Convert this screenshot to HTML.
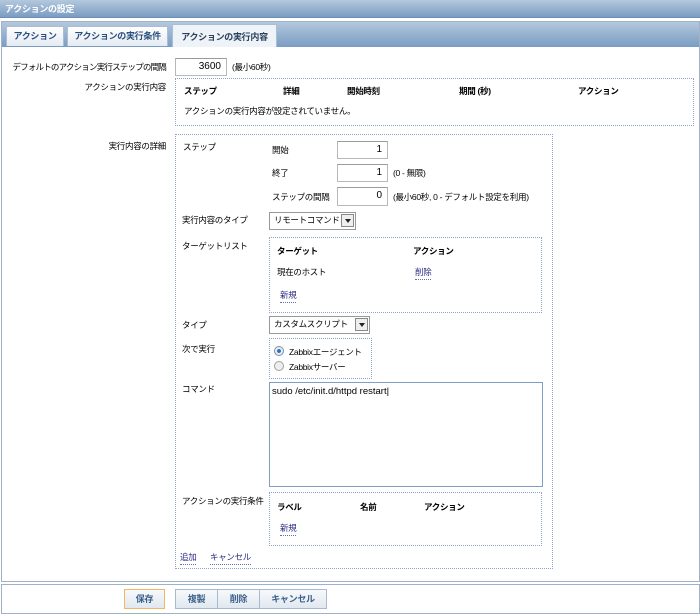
<!DOCTYPE html>
<html><head><meta charset="utf-8"><style>
*{box-sizing:border-box;margin:0;padding:0}
body{width:700px;height:615px;background:#fff;font-family:"Liberation Sans","Noto Sans CJK JP",sans-serif;font-size:8.5px;letter-spacing:-0.3px;color:#000;position:relative;overflow:hidden}
.a{position:absolute;white-space:nowrap;line-height:12px}
.bar{background:linear-gradient(#b3c8dd,#7a9cc2)}
.inp{position:absolute;border:1px solid #b8b8b8;border-top-color:#9a9a9a;background:#fff;text-align:right;padding-right:5px;line-height:15px;font-size:10px;letter-spacing:0}
.box{position:absolute;border:1px dotted #8fa3cc}
.b{font-weight:bold}
.lk{color:#2a2a80;border-bottom:1px dotted #6b6bb0;padding-bottom:1px}
.sel{position:absolute;border:1px solid #999;background:#fff;padding-left:4px;line-height:15px;white-space:nowrap;overflow:hidden}
.sel i{position:absolute;right:1px;top:1px;width:13px;height:13px;border:1px solid #888;background:#eee}
.sel i:after{content:"";position:absolute;left:3px;top:4px;border:3px solid transparent;border-top:4px solid #222}
.tab{position:absolute;top:26px;height:20px;background:linear-gradient(#fff,#e4ebf3);border:1px solid #a8bdd6;border-bottom:none;color:#2b4f7c;font-weight:bold;text-align:center;line-height:19px;white-space:nowrap;font-size:9px}
.btn{position:absolute;top:589px;height:20px;background:linear-gradient(#f7f9fb,#e1e8f0);border:1px solid #a7b9cf;color:#3b5f8a;font-weight:bold;text-align:center;line-height:18px;font-size:9px}
</style></head><body>
<div class="bar" style="position:absolute;left:0;top:0;width:700px;height:18px;border-bottom:1px solid #6d8fb6"></div>
<div class="a b" style="left:5px;top:3px;color:#fff;font-size:9px">アクションの設定</div>
<div style="position:absolute;left:1px;top:21px;width:699px;height:561px;border:1px solid #9fb2c8"></div>
<div class="bar" style="position:absolute;left:2px;top:22px;width:697px;height:25px"></div>
<div class="tab" style="left:6px;width:58px">アクション</div>
<div class="tab" style="left:67px;width:101px">アクションの実行条件</div>
<div class="tab" style="left:172px;width:105px;top:24px;height:23px;background:#eef3f8;color:#2b3f5c;line-height:24px">アクションの実行内容</div>

<div class="a" style="right:534px;top:61px;letter-spacing:-0.8px">デフォルトのアクション実行ステップの間隔</div>
<div class="inp" style="left:175px;top:58px;width:52px;height:18px">3600</div>
<div class="a" style="left:232px;top:61px">(最小60秒)</div>
<div class="a" style="right:534px;top:81px">アクションの実行内容</div>
<div class="box" style="left:175px;top:78px;width:519px;height:48px"></div>
<div class="a b" style="left:184px;top:85px">ステップ</div>
<div class="a b" style="left:283px;top:85px">詳細</div>
<div class="a b" style="left:347px;top:85px">開始時刻</div>
<div class="a b" style="left:459px;top:85px">期間 (秒)</div>
<div class="a b" style="left:578px;top:85px">アクション</div>
<div class="a" style="left:184px;top:105px">アクションの実行内容が設定されていません。</div>

<div class="a" style="right:534px;top:140px">実行内容の詳細</div>
<div class="box" style="left:175px;top:134px;width:378px;height:435px"></div>
<div class="a" style="left:183px;top:141px">ステップ</div>
<div class="a" style="left:272px;top:144px">開始</div>
<div class="inp" style="left:337px;top:141px;width:51px;height:18px">1</div>
<div class="a" style="left:272px;top:167px">終了</div>
<div class="inp" style="left:337px;top:164px;width:51px;height:18px">1</div>
<div class="a" style="left:393px;top:167px">(0 - 無限)</div>
<div class="a" style="left:272px;top:191px">ステップの間隔</div>
<div class="inp" style="left:337px;top:187px;width:51px;height:19px">0</div>
<div class="a" style="left:393px;top:191px">(最小60秒, 0 - デフォルト設定を利用)</div>
<div class="a" style="left:182px;top:214px">実行内容のタイプ</div>
<div class="sel" style="left:269px;top:212px;width:87px;height:18px">リモートコマンド<i></i></div>
<div class="a" style="left:182px;top:240px">ターゲットリスト</div>
<div class="box" style="left:269px;top:237px;width:273px;height:76px"></div>
<div class="a b" style="left:277px;top:245px">ターゲット</div>
<div class="a b" style="left:413px;top:245px">アクション</div>
<div class="a" style="left:277px;top:266px">現在のホスト</div>
<div class="a lk" style="left:415px;top:266px">削除</div>
<div class="a lk" style="left:280px;top:289px">新規</div>
<div class="a" style="left:182px;top:319px">タイプ</div>
<div class="sel" style="left:269px;top:316px;width:101px;height:18px">カスタムスクリプト<i></i></div>
<div class="a" style="left:182px;top:343px">次で実行</div>
<div class="box" style="left:269px;top:338px;width:103px;height:41px"></div>
<div style="position:absolute;left:274px;top:346px;width:10px;height:10px;border-radius:50%;border:1px solid #7a8fa8;background:radial-gradient(#2a6fc0 30%,#e8eef5 40%)"></div>
<div class="a" style="left:289px;top:346px">Zabbixエージェント</div>
<div style="position:absolute;left:274px;top:361px;width:10px;height:10px;border-radius:50%;border:1px solid #a0a0a0;background:#eee"></div>
<div class="a" style="left:289px;top:361px">Zabbixサーバー</div>
<div class="a" style="left:182px;top:383px">コマンド</div>
<div style="position:absolute;left:269px;top:382px;width:274px;height:105px;border:1px solid #7d9fc4"></div>
<div class="a" style="left:272px;top:386px;font-size:9.5px;letter-spacing:0">sudo /etc/init.d/httpd restart|</div>
<div class="a" style="left:182px;top:495px">アクションの実行条件</div>
<div class="box" style="left:269px;top:492px;width:273px;height:54px"></div>
<div class="a b" style="left:277px;top:501px">ラベル</div>
<div class="a b" style="left:360px;top:501px">名前</div>
<div class="a b" style="left:424px;top:501px">アクション</div>
<div class="a lk" style="left:280px;top:522px">新規</div>
<div class="a lk" style="left:180px;top:551px">追加</div>
<div class="a lk" style="left:210px;top:551px">キャンセル</div>

<div style="position:absolute;left:1px;top:584px;width:699px;height:30px;border:1px solid #9fb2c8"></div>
<div class="btn" style="left:124px;width:41px;border-color:#f2b860">保存</div>
<div class="btn" style="left:175px;width:43px">複製</div>
<div class="btn" style="left:217px;width:43px">削除</div>
<div class="btn" style="left:259px;width:68px">キャンセル</div>
</body></html>
